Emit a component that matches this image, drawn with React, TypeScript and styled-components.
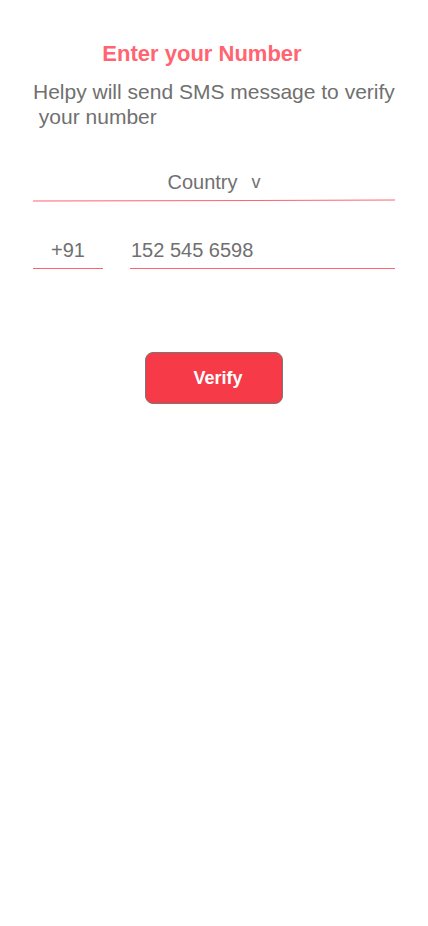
import React from "react";
import styled, { createGlobalStyle } from "styled-components";

const GlobalStyle = createGlobalStyle`
  html, body { margin: 0; padding: 0; background: #ffffff; }
  body { font-family: "Liberation Sans", Arial, sans-serif; }
`;

const Screen = styled.div`
  width: 428px;
  min-height: 926px;
  box-sizing: border-box;
  padding: 41px 33px 0 33px;
  display: flex;
  flex-direction: column;
  align-items: stretch;
  background: #ffffff;
`;

const Title = styled.h1`
  margin: 0;
  padding-right: 24px;
  text-align: center;
  font-size: 22px;
  line-height: 26px;
  font-weight: 700;
  color: #ff6470;
`;

const Subtitle = styled.p`
  margin: 12px 0 0 0;
  font-size: 21px;
  line-height: 25px;
  color: #707070;
  white-space: pre-wrap;
`;

const Field = styled.div<{ $align?: string }>`
  display: flex;
  justify-content: ${(p) => p.$align || "flex-start"};
  align-items: flex-end;
  height: 34px;
  box-sizing: border-box;
  padding-bottom: 6px;
  border-bottom: 1px solid #ff6470;
  font-size: 20px;
  line-height: 23px;
  color: #707070;
`;

const CountryField = styled(Field)`
  margin-top: 38px;
  flex: 0 0 auto;
  position: relative;
  border-bottom: none;
  padding-bottom: 7px;
`;

const TiltedLine = styled.span`
  position: absolute;
  left: 0;
  right: 0;
  bottom: 0;
  height: 1px;
  background: #ff6470;
  transform: rotate(-0.16deg);
`;

const CodeField = styled(Field)`
  flex: 0 0 70px;
`;

const NumberField = styled(Field)`
  flex: 1 1 auto;
`;

const Chevron = styled.span`
  margin-left: 14px;
  font-size: 18px;
`;

const PhoneRow = styled.div`
  display: flex;
  gap: 27px;
  margin-top: 34px;
`;

const CodeText = styled.span`
  padding-left: 18px;
`;

const NumberText = styled.span`
  padding-left: 1px;
`;

const ButtonRow = styled.div`
  display: flex;
  justify-content: center;
  margin-top: 83px;
`;

const VerifyButton = styled.button`
  width: 138px;
  height: 52px;
  border: 1px solid #777777;
  border-radius: 8px;
  background: #f63a48;
  color: #ffffff;
  font-family: "Liberation Sans", Arial, sans-serif;
  font-size: 18px;
  font-weight: 700;
  padding: 0 0 0 8px;
  cursor: pointer;
`;

export default function App() {
  return (
    <>
      <GlobalStyle />
      <Screen>
        <Title>Enter your Number</Title>
        <Subtitle>{"Helpy will send SMS message to verify\n your number"}</Subtitle>
        <CountryField $align="center">
          <span>Country</span>
          <Chevron>v</Chevron>
          <TiltedLine />
        </CountryField>
        <PhoneRow>
          <CodeField>
            <CodeText>+91</CodeText>
          </CodeField>
          <NumberField>
            <NumberText>152 545 6598</NumberText>
          </NumberField>
        </PhoneRow>
        <ButtonRow>
          <VerifyButton>Verify</VerifyButton>
        </ButtonRow>
      </Screen>
    </>
  );
}
